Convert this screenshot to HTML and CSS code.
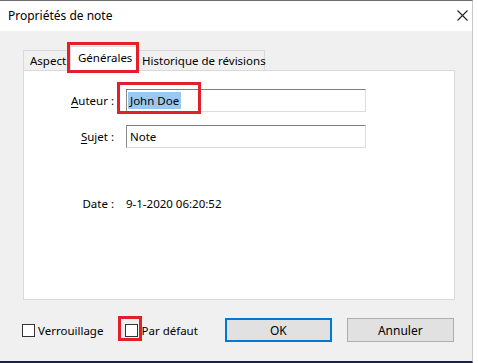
FILE: index.html
```html
<!DOCTYPE html>
<html lang="fr">
<head>
<meta charset="utf-8">
<link rel="stylesheet" href="styles.css">
</head>
<body>
<div class="window">
  <div class="titlebar">
    <span class="title">Propriétés de note</span>
    <svg class="close" width="11" height="11" viewBox="0 0 11 11"><path d="M0.5 0.5 L10.5 10.5 M10.5 0.5 L0.5 10.5" stroke="#222" stroke-width="1.1" fill="none"/></svg>
  </div>
  <div class="body">
    <div class="tabs">
      <div class="tab tab-aspect">Aspect</div>
      <div class="tab tab-active">Générales</div>
      <div class="tab tab-hist">Historique de révisions</div>
      <div class="mark mark-tab"></div>
    </div>
    <div class="panel">
      <div class="form">
        <label class="lbl"><u>A</u>uteur :</label>
        <div class="input"><span class="sel">John Doe</span></div>
        <label class="lbl"><u>S</u>ujet :</label>
        <div class="input"><span class="txt">Note</span></div>
      </div>
      <div class="date-row">
        <span class="lbl">Date :</span>
        <span class="date">9-1-2020 06:20:52</span>
      </div>
      <div class="mark mark-author"></div>
    </div>
    <div class="footer">
      <div class="check check-lock"><span class="box"></span><span>Verrouillage</span></div>
      <div class="check check-default"><span class="box"></span><span>Par défaut</span><div class="mark mark-check"></div></div>
      <button class="btn btn-ok">OK</button>
      <button class="btn btn-cancel">Annuler</button>
    </div>
  </div>
</div>
</body>
</html>
```

FILE: styles.css
```css
* { box-sizing: border-box; }
html, body { margin: 0; padding: 0; background: #ffffff; }
body {
  font-family: "Noto Sans", "Open Sans", sans-serif;
  font-size: 11.5px;
  color: #000;
  width: 478px;
  height: 363px;
  overflow: hidden;
}
.window {
  width: 473px;
  height: 363px;
  border-top: 1px solid #6d6d6d;
  border-right: 1px solid #c9c9c9;
  border-bottom: 2px solid #1d2142;
  display: flex;
  flex-direction: column;
}
.titlebar {
  height: 30px;
  background: #fff;
  display: flex;
  align-items: center;
  justify-content: space-between;
  padding: 0 4px 0 8px;
  flex: none;
}
.title { font-size: 12px; line-height: 16px; margin-top: -1px; }
.close { margin-right: 0; margin-top: -2px; }
.body {
  flex: 1;
  background: #f0f0f0;
  padding: 13px 18px 0 23px;
  display: flex;
  flex-direction: column;
}
.tabs {
  position: relative;
  display: flex;
  align-items: flex-end;
  height: 26px;
  padding-left: 0;
}
.tab {
  height: 20px;
  line-height: 19px;
  border: 1px solid #d9d9d9;
  border-bottom: none;
  background: #f0f0f0;
  white-space: nowrap;
}
.tab-aspect { width: 49px; padding-left: 6px; border-right: none; overflow: hidden; }
.tab-active {
  position: relative;
  z-index: 2;
  height: 25px;
  width: 68px;
  margin-left: -2px;
  margin-bottom: -1px;
  background: #fff;
  padding-left: 7px;
  line-height: 22px;
}
.tab-hist { width: 128px; padding-left: 4px; margin-left: -1px; }
.panel {
  position: relative;
  height: 230px;
  width: 432px;
  background: #fff;
  border: 1px solid #d9d9d9;
  padding-top: 18px;
}
.form {
  display: grid;
  grid-template-columns: 90px 240px;
  column-gap: 12px;
  row-gap: 13px;
  align-items: center;
}
.lbl { text-align: right; white-space: nowrap; }
.lbl u { text-decoration: underline; text-underline-offset: 2px; }
.input {
  height: 23px;
  border-top: 1px solid #7f7f7f;
  border-left: 1px solid #8a8a8a;
  border-right: 1px solid #dcdcdc;
  border-bottom: 1px solid #dcdcdc;
  background: #fff;
  display: flex;
  align-items: center;
  padding-left: 1px;
}
.sel { background: #99c9ef; padding: 0 2px 0 2px; line-height: 17px; }
.txt { padding-left: 2px; }
.date-row {
  display: grid;
  grid-template-columns: 90px auto;
  column-gap: 12px;
  margin-top: 48px;
}
.footer {
  position: relative;
  display: flex;
  align-items: center;
  margin-top: 18px;
  height: 24px;
  margin-left: -1px;
}
.check { display: flex; align-items: center; position: relative; }
.box {
  width: 13px;
  height: 13px;
  border: 1px solid #333;
  background: #fff;
  margin-right: 3px;
}
.check-lock { width: 105px; }
.check-default { width: 101px; }
.btn {
  font-family: inherit;
  font-size: 12px;
  height: 24px;
  background: #e1e1e1;
  border: 1px solid #adadad;
  color: #000;
  padding: 0;
}
.btn-ok { width: 108px; border: 2px solid #0078d7; }
.btn-cancel { width: 109px; margin-left: 15px; }
.mark {
  position: absolute;
  border: 3px solid #e2202c;
  z-index: 5;
  pointer-events: none;
}
.mark-tab { left: 44px; top: -2px; width: 72px; height: 31px; }
.mark-author { left: 93px; top: 11px; width: 84px; height: 32px; }
.mark-check { left: -7px; top: -7px; width: 24px; height: 25px; }
```
